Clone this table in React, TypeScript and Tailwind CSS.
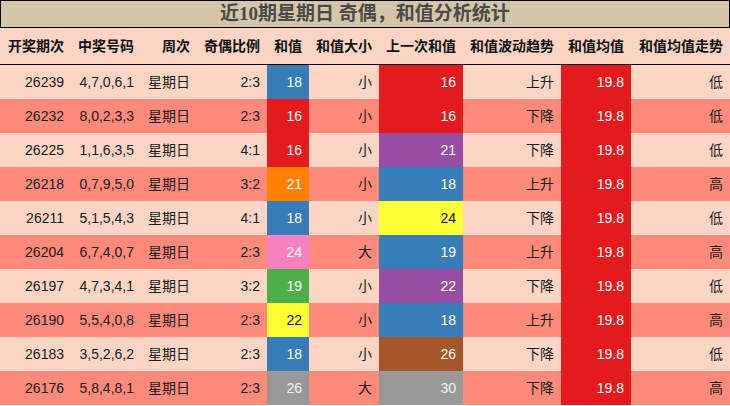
const LIGHT = 'bg-[#fcd5c4]';
const DARK = 'bg-[#fe8a7b]';

const HEADERS = [
  '开奖期次',
  '中奖号码',
  '周次',
  '奇偶比例',
  '和值',
  '和值大小',
  '上一次和值',
  '和值波动趋势',
  '和值均值',
  '和值均值走势',
];

// cell colours taken from the chart (set1 palette)
const C: Record<string, string> = {
  red: 'bg-[#e41a1c] text-white',
  blue: 'bg-[#377eb8] text-white',
  orange: 'bg-[#ff7f00] text-white',
  purple: 'bg-[#984ea3] text-white',
  green: 'bg-[#4daf4a] text-white',
  yellow: 'bg-[#ffff33] text-[#111]',
  brown: 'bg-[#a65628] text-white',
  pink: 'bg-[#f781bf] text-white',
  gray: 'bg-[#999999] text-[#f2f2f2]',
};

interface Row {
  issue: string;
  nums: string;
  ratio: string;
  sum: number;
  sumColor: string;
  size: string;
  prev: number;
  prevColor: string;
  trend: string;
  level: string;
}

const ROWS: Row[] = [
  { issue: '26239', nums: '4,7,0,6,1', ratio: '2:3', sum: 18, sumColor: 'blue', size: '小', prev: 16, prevColor: 'red', trend: '上升', level: '低' },
  { issue: '26232', nums: '8,0,2,3,3', ratio: '2:3', sum: 16, sumColor: 'red', size: '小', prev: 16, prevColor: 'red', trend: '下降', level: '低' },
  { issue: '26225', nums: '1,1,6,3,5', ratio: '4:1', sum: 16, sumColor: 'red', size: '小', prev: 21, prevColor: 'purple', trend: '下降', level: '低' },
  { issue: '26218', nums: '0,7,9,5,0', ratio: '3:2', sum: 21, sumColor: 'orange', size: '小', prev: 18, prevColor: 'blue', trend: '上升', level: '高' },
  { issue: '26211', nums: '5,1,5,4,3', ratio: '4:1', sum: 18, sumColor: 'blue', size: '小', prev: 24, prevColor: 'yellow', trend: '下降', level: '低' },
  { issue: '26204', nums: '6,7,4,0,7', ratio: '2:3', sum: 24, sumColor: 'pink', size: '大', prev: 19, prevColor: 'blue', trend: '上升', level: '高' },
  { issue: '26197', nums: '4,7,3,4,1', ratio: '3:2', sum: 19, sumColor: 'green', size: '小', prev: 22, prevColor: 'purple', trend: '下降', level: '低' },
  { issue: '26190', nums: '5,5,4,0,8', ratio: '2:3', sum: 22, sumColor: 'yellow', size: '小', prev: 18, prevColor: 'blue', trend: '上升', level: '高' },
  { issue: '26183', nums: '3,5,2,6,2', ratio: '2:3', sum: 18, sumColor: 'blue', size: '小', prev: 26, prevColor: 'brown', trend: '下降', level: '低' },
  { issue: '26176', nums: '5,8,4,8,1', ratio: '2:3', sum: 26, sumColor: 'gray', size: '大', prev: 30, prevColor: 'gray', trend: '下降', level: '高' },
];

const GRID = 'grid grid-cols-[71px_70px_56px_70px_42px_70px_84px_98px_70px_99px]';

const Cell = ({ children, className = '' }: { children: React.ReactNode; className?: string }) => (
  <div className={`flex items-center justify-end pr-[7px] whitespace-nowrap ${className}`}>{children}</div>
);

export default function App() {
  return (
    <div
      className="w-[730px] h-[406px] bg-white overflow-hidden"
      style={{ fontFamily: '"Liberation Sans", "Noto Sans CJK SC", sans-serif' }}
    >
      <div
        className="h-[28px] border border-black bg-[#d6c6a9] flex items-center justify-center text-[19px] font-bold text-[#4a4a4a]"
        style={{ fontFamily: '"Liberation Serif", "Noto Sans CJK SC", serif' }}
      >
        近10期星期日 奇偶，和值分析统计
      </div>

      {/* header */}
      <div className={`${GRID} h-[37px] ${LIGHT} border-b border-black text-[14px] font-bold text-[#111]`}>
        {HEADERS.map(h => (
          <Cell key={h}>{h}</Cell>
        ))}
      </div>

      {ROWS.map((r, i) => {
        const bg = i % 2 === 0 ? LIGHT : DARK;
        return (
          <div key={r.issue} className={`${GRID} h-[34px] ${bg} text-[14px] text-[#1a1a1a]`}>
            <Cell>{r.issue}</Cell>
            <Cell>{r.nums}</Cell>
            <Cell>星期日</Cell>
            <Cell>{r.ratio}</Cell>
            <Cell className={C[r.sumColor]}>{r.sum}</Cell>
            <Cell>{r.size}</Cell>
            <Cell className={C[r.prevColor]}>{r.prev}</Cell>
            <Cell>{r.trend}</Cell>
            <Cell className={C.red}>19.8</Cell>
            <Cell>{r.level}</Cell>
          </div>
        );
      })}
    </div>
  );
}
